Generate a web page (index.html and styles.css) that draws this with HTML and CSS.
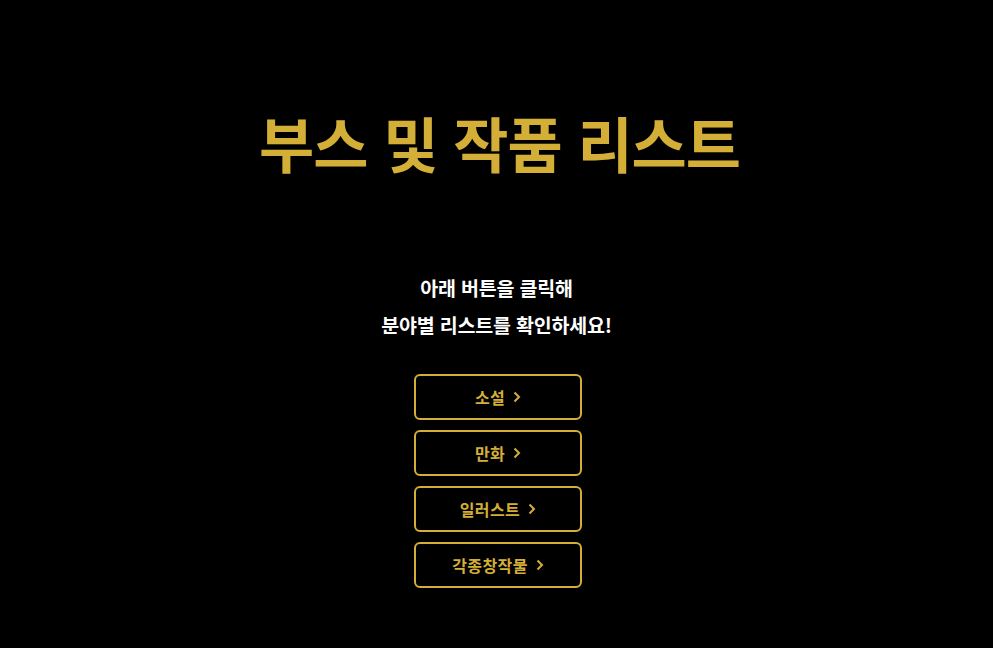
FILE: index.html
```html
<!DOCTYPE html>
<html lang="ko">
<head>
<meta charset="utf-8">
<title>부스 및 작품 리스트</title>
<link rel="stylesheet" href="styles.css">
</head>
<body>
<main class="page">
  <h1 class="title">부스 및 작품 리스트</h1>
  <p class="intro">아래 버튼을 클릭해<br>분야별 리스트를 확인하세요!</p>
  <nav class="menu">
    <a class="btn" href="#">소설 <svg class="chev" viewBox="0 0 8 12" width="8" height="12"><polyline points="1.5,1.5 6,6 1.5,10.5"/></svg></a>
    <a class="btn" href="#">만화 <svg class="chev" viewBox="0 0 8 12" width="8" height="12"><polyline points="1.5,1.5 6,6 1.5,10.5"/></svg></a>
    <a class="btn" href="#">일러스트 <svg class="chev" viewBox="0 0 8 12" width="8" height="12"><polyline points="1.5,1.5 6,6 1.5,10.5"/></svg></a>
    <a class="btn" href="#">각종창작물 <svg class="chev" viewBox="0 0 8 12" width="8" height="12"><polyline points="1.5,1.5 6,6 1.5,10.5"/></svg></a>
  </nav>
</main>
</body>
</html>
```

FILE: styles.css
```css
html, body {
  margin: 0;
  background: #000;
}
.page {
  display: flex;
  flex-direction: column;
  align-items: center;
  padding-top: 102px;
  font-family: "Noto Sans CJK KR", "Noto Sans", sans-serif;
}
.title {
  margin: 0;
  font-size: 60px;
  line-height: 80px;
  font-weight: 700;
  color: #d4af37;
  letter-spacing: -1px;
  padding-left: 6px;
}
.intro {
  margin: 87px 0 0;
  color: #fff;
  font-size: 19.5px;
  line-height: 37px;
  font-weight: 700;
  text-align: center;
  letter-spacing: -0.2px;
}
.menu {
  display: flex;
  flex-direction: column;
  gap: 10.5px;
  margin-top: 31px;
  padding-left: 3px;
}
.btn {
  box-sizing: border-box;
  width: 168px;
  height: 45.5px;
  border: 2px solid #d4af37;
  border-radius: 6px;
  display: flex;
  align-items: center;
  justify-content: center;
  gap: 6px;
  color: #d4af37;
  text-decoration: none;
  font-size: 16px;
  font-weight: 700;
  letter-spacing: 0.4px;
}
.chev {
  fill: none;
  stroke: #d4af37;
  stroke-width: 2;
  margin-left: 2px;
}
```
